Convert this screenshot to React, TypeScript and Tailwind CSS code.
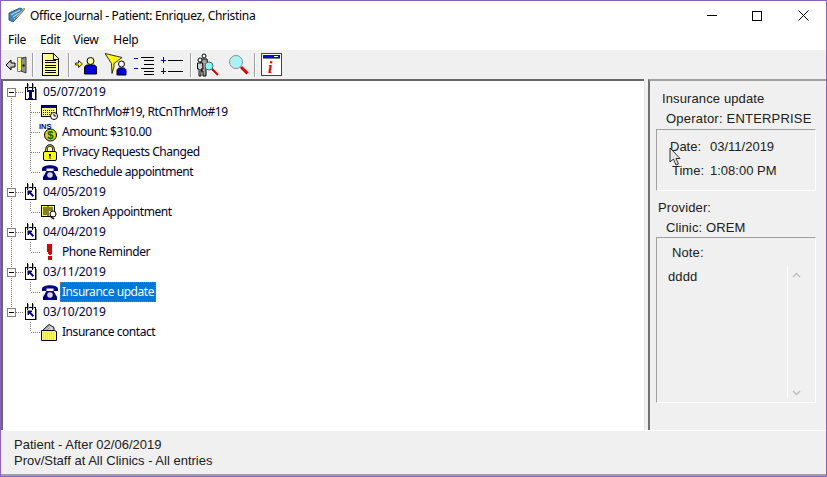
import type { ReactNode } from 'react'

const UI_FONT = "font-['Noto_Sans',sans-serif] tracking-[-0.3px]"
const PANEL_FONT = "font-['Liberation_Sans',Arial,sans-serif] tracking-[0.12px]"

// ── small bitmap-style icons ──────────────────────────────────────────────

function CalendarIcon({ kind }: { kind: 'T' | 'arrow' }) {
  return (
    <svg width="14" height="18" viewBox="0 0 14 18" className="shrink-0" shapeRendering="crispEdges">
      <rect x="1.500" y="4.500" width="10" height="12" fill="#fff" stroke="#000" />
      <rect x="12" y="6" width="1" height="11" fill="#808080" />
      <rect x="3" y="0" width="1" height="7" fill="#000" />
      <rect x="4" y="1" width="1" height="5" fill="#a0a0a0" />
      <rect x="8" y="0" width="1" height="7" fill="#000" />
      <rect x="9" y="1" width="1" height="5" fill="#a0a0a0" />
      {kind === 'T' ? (
        <path d="M3 7h7v2H8v6h1v1H4v-1h1V9H3z" fill="#000080" />
      ) : (
        <path d="M3.500 7.500h4.500V9H6.800L10 12.500 8.700 14 5 10.200V12H3.500z" fill="#000080" shapeRendering="auto" />
      )}
    </svg>
  )
}

function CardIcon() {
  return (
    <svg width="17" height="16" viewBox="0 0 17 16">
      <rect x="0.500" y="1.500" width="15" height="11" fill="#ffff80" stroke="#000" />
      <rect x="1" y="2" width="14" height="2" fill="#000080" />
      <path d="M2 6.500h12M2 8.500h9M2 10.500h8" stroke="#000" strokeDasharray="1 1" />
      <circle cx="13" cy="12" r="3.500" fill="#fff" stroke="#000" />
      <path d="M13 10v2h2" stroke="#000" fill="none" />
    </svg>
  )
}

function InsCoinIcon() {
  return (
    <svg width="19" height="19" viewBox="0 0 19 19" className="-ml-0.5 tracking-normal">
      <circle cx="11.500" cy="12" r="6" fill="#d8d800" stroke="#000" />
      <text x="8.200" y="16" fontSize="11" fontWeight="700" fontFamily="Liberation Sans, sans-serif" fill="#006000">
        $
      </text>
      <text x="0" y="6" fontSize="7.500" fontWeight="700" fontFamily="Liberation Sans, sans-serif" fill="#000080">
        INS
      </text>
    </svg>
  )
}

function LockIcon() {
  return (
    <svg width="16" height="17" viewBox="0 0 16 17">
      <path d="M4.500 8V5a3.500 3.500 0 0 1 7 0v3" fill="none" stroke="#000" strokeWidth="2.500" />
      <path d="M4.500 8V5a3.500 3.500 0 0 1 7 0v3" fill="none" stroke="#ffff00" strokeWidth="0.800" />
      <rect x="1.500" y="7.500" width="13" height="9" rx="1.500" fill="#ffff00" stroke="#000" />
      <path d="M7 10h2v2h-.5v3h-1v-3H7z" fill="#000" />
    </svg>
  )
}

function PhoneIcon() {
  return (
    <svg width="16" height="16" viewBox="0 0 16 16">
      <path d="M0 5c0-5 16-5 16 0v2h-4.500V4.500h-7V7H0z" fill="#000080" />
      <path d="M4.500 7h7L15 13v3H1v-3z" fill="#000080" />
      <circle cx="8" cy="11" r="2.800" fill="#d8d8d8" />
    </svg>
  )
}

function BrokenIcon() {
  return (
    <svg width="17" height="16" viewBox="0 0 17 16">
      <rect x="0.500" y="1.500" width="13" height="11" fill="#ffff60" stroke="#000" />
      <path d="M2 4h4M2 6h4M2 8h4M2 10h4M8 4h4M8 6h4" stroke="#000" />
      <path d="M7 1v12" stroke="#000" />
      <circle cx="12" cy="10" r="3" fill="#fff" stroke="#000" />
      <path d="M10 13l3 2" stroke="#000" strokeWidth="1.500" />
    </svg>
  )
}

function AlertIcon() {
  return (
    <svg width="16" height="16" viewBox="0 0 16 16" shapeRendering="crispEdges">
      <path d="M5 0h5v10H9v1H7v-1H6V8H5z" fill="#e00000" />
      <rect x="6" y="12" width="4" height="4" fill="#e00000" />
    </svg>
  )
}

function FolderIcon() {
  return (
    <svg width="17" height="17" viewBox="0 0 17 17">
      <path d="M1.500 6.500 8 .5l5 3v4h-11.500z" fill="#d8d8d8" stroke="#000" />
      <path d="M4 5l4-3M5 6.500l4-3" stroke="#808080" />
      <path d="M.5 6.500h13l2 1v9H.5z" fill="#ffff60" stroke="#000" />
      <path d="M2 9h12M2 11h12M2 13h12M2 15h12" stroke="#c8c840" strokeDasharray="1 1" />
    </svg>
  )
}

// ── toolbar icons ─────────────────────────────────────────────────────────

function ExitDoorIcon() {
  return (
    <svg width="22" height="18" viewBox="0 0 22 18">
      <path d="M1 9l5-5v3h4v4H6v3z" fill="#c8c8c8" stroke="#000" />
      <path d="M12.500 1.500h8v14h-8z" fill="#fff" stroke="#808080" />
      <path d="M16 3l5-2v16l-5-2z" fill="#909090" stroke="#404040" />
      <path d="M13 3h3v11h-3z" fill="#ffff60" />
      <rect x="17.500" y="8.500" width="2" height="2" fill="#000" />
    </svg>
  )
}

function PageIcon() {
  return (
    <svg width="18" height="23" viewBox="0 0 18 23" shapeRendering="crispEdges">
      <path d="M.5.5h11l5 5v17H.5z" fill="#ffff80" stroke="#000" />
      <path d="M11 1v5h5" fill="#fff" stroke="#000" />
      <path d="M3 7h11M3 9.500h11M3 12h11M3 14.500h11M3 17h11M3 19.500h11" stroke="#000" />
    </svg>
  )
}

function PersonArrowIcon() {
  return (
    <svg width="22" height="20" viewBox="0 0 22 20">
      <path d="M0.500 8h3V5.500l4 3.500-4 3.500V10h-3z" fill="#ffff00" stroke="#000" strokeWidth="0.800" />
      <circle cx="15.500" cy="6" r="3.500" fill="#ffffa0" stroke="#000" />
      <path d="M9.500 19v-6c0-2.500 2-3 3-3h6c1 0 3 .5 3 3v6z" fill="#0000e0" stroke="#000" />
    </svg>
  )
}

function FilterPersonIcon() {
  return (
    <svg width="23" height="23" viewBox="0 0 23 23">
      <path d="M0 .5l17 4-8 6 0 3-2 7-.5-10z" fill="#ffff00" stroke="#000" strokeWidth="0.800" />
      <circle cx="16.500" cy="11" r="3" fill="#fff" stroke="#000" />
      <path d="M12 22v-4c0-2 1.500-3 2.500-3h4c1 0 2.500 1 2.500 3v4z" fill="#0000e0" stroke="#000" />
    </svg>
  )
}

function IndentIcon() {
  return (
    <svg width="22" height="20" viewBox="0 0 22 20" shapeRendering="crispEdges">
      <path d="M1 3h4M1 13h4" stroke="#000080" strokeWidth="1" />
      <path d="M8 2h13M11 5h10M11 9h10M8 13h13M11 16h10M11 19h10" stroke="#000" strokeWidth="1" />
    </svg>
  )
}

function PlusListIcon() {
  return (
    <svg width="22" height="18" viewBox="0 0 22 18" shapeRendering="crispEdges">
      <path d="M0 4h5M2.500 1v6M0 15h5M2.500 12v6" stroke="#000080" strokeWidth="1" />
      <path d="M7 4h15M7 15h15" stroke="#000" strokeWidth="1" />
    </svg>
  )
}

function PeopleMagnifyIcon() {
  return (
    <svg width="22" height="24" viewBox="0 0 22 24">
      <circle cx="7" cy="3" r="2" fill="#fff" stroke="#000" />
      <path d="M4 6h6l1 8H9v9H6v-5H4z" fill="#a0a0a0" stroke="#000" />
      <circle cx="3" cy="7" r="2" fill="#fff" stroke="#000" />
      <path d="M0.500 10h5l.5 6H4v7H2v-7H.5z" fill="#d0d0d0" stroke="#000" />
      <circle cx="12" cy="13" r="4" fill="#80ffff" stroke="#606060" />
      <path d="M15 16l6 6" stroke="#d00000" strokeWidth="2" />
    </svg>
  )
}

function MagnifierIcon() {
  return (
    <svg width="21" height="21" viewBox="0 0 21 21">
      <circle cx="8" cy="8" r="6.500" fill="#a8f4f4" stroke="#909090" />
      <path d="M13 13l6.500 6.500" stroke="#e00000" strokeWidth="3" />
    </svg>
  )
}

function InfoWindowIcon() {
  return (
    <svg width="21" height="23" viewBox="0 0 21 23" className="tracking-normal">
      <rect x="0.500" y="0.500" width="20" height="22" fill="#fff" stroke="#404040" />
      <rect x="2" y="2" width="17" height="3" fill="#0000e0" />
      <rect x="13" y="3" width="4" height="1" fill="#fff" />
      <rect x="2" y="5" width="17" height="1" fill="#808080" />
      <text x="7" y="20" fontSize="16" fontWeight="700" fontStyle="italic" fontFamily="Liberation Serif, serif" fill="#e00000">
        i
      </text>
    </svg>
  )
}

function ToolSep({ className }: { className: string }) {
  return <span className={`h-[24px] w-[2px] shrink-0 border-l border-[#a0a0a0] bg-white ${className}`} />
}

// ── tree ──────────────────────────────────────────────────────────────────

/* connector lines for one 20px row; drawn relative to the row's left edge */
function RootGutter({ first, last }: { first?: boolean; last?: boolean }) {
  return (
    <svg width="20" height="20" viewBox="0 0 20 20" className="shrink-0" shapeRendering="crispEdges">
      {!first && <path d="M7.500 0v6" stroke="#808080" strokeDasharray="1 1" />}
      {!last && <path d="M7.500 14v6" stroke="#808080" strokeDasharray="1 1" />}
      <path d="M12 10h8" stroke="#808080" strokeDasharray="1 1" />
      <rect x="3.500" y="6.500" width="8" height="8" fill="#fff" stroke="#808080" />
      <path d="M5 10.500h5" stroke="#000" />
    </svg>
  )
}

function ChildGutter({ more, rootMore }: { more: boolean; rootMore: boolean }) {
  return (
    <svg width="37" height="20" viewBox="0 0 37 20" className="shrink-0" shapeRendering="crispEdges">
      {rootMore && <path d="M7.500 0v20" stroke="#808080" strokeDasharray="1 1" />}
      <path d={more ? 'M26.500 0v20' : 'M26.500 0v10'} stroke="#808080" strokeDasharray="1 1" />
      <path d="M27 10.500h10" stroke="#808080" strokeDasharray="1 1" />
    </svg>
  )
}

type Entry = { icon: ReactNode; label: string; selected?: boolean }
type Day = { date: string; kind: 'T' | 'arrow'; entries: Entry[] }

const DAYS: Day[] = [
  {
    date: '05/07/2019',
    kind: 'T',
    entries: [
      { icon: <CardIcon />, label: 'RtCnThrMo#19, RtCnThrMo#19' },
      { icon: <InsCoinIcon />, label: 'Amount: $310.00' },
      { icon: <LockIcon />, label: 'Privacy Requests Changed' },
      { icon: <PhoneIcon />, label: 'Reschedule appointment' },
    ],
  },
  { date: '04/05/2019', kind: 'arrow', entries: [{ icon: <BrokenIcon />, label: 'Broken Appointment' }] },
  { date: '04/04/2019', kind: 'arrow', entries: [{ icon: <AlertIcon />, label: 'Phone Reminder' }] },
  { date: '03/11/2019', kind: 'arrow', entries: [{ icon: <PhoneIcon />, label: 'Insurance update', selected: true }] },
  { date: '03/10/2019', kind: 'arrow', entries: [{ icon: <FolderIcon />, label: 'Insurance contact' }] },
]

function TreeRows() {
  return (
    <div className="pt-[1px] text-[12px] leading-[20px] tracking-[-0.45px] text-black">
      {DAYS.map((day, d) => (
        <div key={day.date}>
          <div className="flex h-[20px] items-center">
            <RootGutter first={d === 0} last={d === DAYS.length - 1} />
            <CalendarIcon kind={day.kind} />
            <span className="ml-[5px] tracking-[-0.1px] text-[#000040]">{day.date}</span>
          </div>
          {day.entries.map((entry, i) => (
            <div key={entry.label} className="flex h-[20px] items-center">
              <ChildGutter more={i < day.entries.length - 1} rootMore={d < DAYS.length - 1} />
              <span className="flex w-[17px] shrink-0 justify-center">{entry.icon}</span>
              {entry.selected ? (
                <span className="ml-[2px] border border-dotted border-[#d06000] bg-[#0078d7] pl-[1px] pr-[1px] leading-[18px] text-white">
                  {entry.label}
                </span>
              ) : (
                <span className="ml-[4px] text-[#000030]">{entry.label}</span>
              )}
            </div>
          ))}
        </div>
      ))}
    </div>
  )
}

// ── right-hand detail panel ───────────────────────────────────────────────

function InsetBox({ className, children }: { className: string; children: ReactNode }) {
  return (
    <div className={`border border-t-[#a0a0a0] border-l-[#a0a0a0] border-r-white border-b-white ${className}`}>
      {children}
    </div>
  )
}

function DetailPanel() {
  return (
    <div className={`relative flex min-w-0 flex-1 flex-col border-t-2 border-l-2 border-t-[#a0a0a0] border-l-[#707070] pt-[8px] ${PANEL_FONT} text-[13px] leading-[20px] text-[#202020]`}>
      <div className="pl-[12px]">Insurance update</div>
      <div className="pl-[16px] tracking-[0.2px]">Operator: ENTERPRISE</div>
      <InsetBox className="ml-[6px] h-[62px] w-[160px] pt-[7px]">
        <div className="flex pl-[13px] tracking-normal">
          <span className="w-[40px]">Date:</span>
          <span>03/11/2019</span>
        </div>
        <div className="mt-[4px] flex pl-[15px] tracking-normal">
          <span className="w-[38px]">Time:</span>
          <span>1:08:00 PM</span>
        </div>
      </InsetBox>
      <div className="mt-[7px] pl-[8px]">Provider:</div>
      <div className="pl-[16px]">Clinic: OREM</div>
      <InsetBox className="mt-[-1px] ml-[6px] flex h-[166px] w-[160px] flex-col pt-[5px]">
        <div className="pl-[15px]">Note:</div>
        <div className="mt-[3px] flex flex-1">
          <div className="flex-1 pt-[1px] pl-[11px]">dddd</div>
          <div className="mb-[4px] flex w-[28px] flex-col items-center justify-between border-l border-white pt-[6px] pb-[2px] pr-[11px] pl-[1px]">
            <svg width="9" height="6" viewBox="0 0 9 6">
              <path d="M1 5l3.500-3.500L8 5" fill="none" stroke="#c0c0c0" strokeWidth="1.500" />
            </svg>
            <svg width="9" height="6" viewBox="0 0 9 6">
              <path d="M1 1l3.500 3.500L8 1" fill="none" stroke="#c0c0c0" strokeWidth="1.500" />
            </svg>
          </div>
        </div>
      </InsetBox>
      {/* mouse pointer caught in the screenshot */}
      <svg width="13" height="19" viewBox="0 0 13 19" className="absolute top-[66px] left-[19px]">
        <path d="M1 1v14l3.500-3 2.500 6 2.500-1-2.500-5.500H11z" fill="#e8e8e8" stroke="#303030" />
      </svg>
    </div>
  )
}

export default function App() {
  return (
    <div className={`flex h-[477px] w-[827px] flex-col overflow-hidden border border-[#8764b8] bg-white ${UI_FONT}`}>
      {/* title bar */}
      <div className="flex h-[29px] shrink-0 items-center bg-white pl-[7px] text-black">
        <svg width="18" height="17" viewBox="0 0 18 17" className="shrink-0">
          <path d="M1 6l11-5 4 2-11 12-4-2z" fill="#3f88b8" stroke="#2a5d85" />
          <path d="M3 8l9-5M5 10l8-5M6 12l6-4" stroke="#cfe6f4" />
          <path d="M16 1l1 1-8 9-2 1 1-2z" fill="#e8c878" stroke="#555" strokeWidth="0.500" />
        </svg>
        <span className="ml-[4px] text-[12px]">Office Journal - Patient: Enriquez, Christina</span>
        <svg width="10" height="1" viewBox="0 0 10 1" className="ml-auto mr-[35px]">
          <rect width="10" height="1" fill="#000" />
        </svg>
        <svg width="10" height="10" viewBox="0 0 10 10" className="mr-[36px]">
          <rect x="0.500" y="0.500" width="9" height="9" fill="none" stroke="#000" />
        </svg>
        <svg width="11" height="11" viewBox="0 0 11 11" className="mr-[17px]">
          <path d="M.5.5l10 10M10.500.5l-10 10" stroke="#000" />
        </svg>
      </div>

      {/* menu */}
      <div className="flex h-[20px] shrink-0 items-center gap-[13px] bg-white pl-[7px] text-[12px] text-black">
        <span>File</span>
        <span className="ml-[1px]">Edit</span>
        <span>View</span>
        <span className="ml-[2px]">Help</span>
      </div>

      {/* toolbar */}
      <div className="flex h-[29px] shrink-0 items-center bg-[#f0f0f0] pl-[4px]">
        <ExitDoorIcon />
        <ToolSep className="ml-[5px]" />
        <span className="ml-[8px] flex"><PageIcon /></span>
        <ToolSep className="ml-[8px]" />
        <span className="ml-[5px] flex"><PersonArrowIcon /></span>
        <span className="ml-[8px] flex"><FilterPersonIcon /></span>
        <span className="ml-[5px] flex"><IndentIcon /></span>
        <span className="ml-[6px] flex"><PlusListIcon /></span>
        <ToolSep className="ml-[7px]" />
        <span className="ml-[5px] flex"><PeopleMagnifyIcon /></span>
        <span className="ml-[9px] flex"><MagnifierIcon /></span>
        <ToolSep className="ml-[5px]" />
        <span className="ml-[5px] flex"><InfoWindowIcon /></span>
      </div>

      {/* body */}
      <div className="flex min-h-0 flex-1 bg-[#f0f0f0]">
        <div className="w-[643px] shrink-0 overflow-hidden border-t-2 border-l-2 border-t-[#696969] border-l-[#696969] bg-white pl-[1px]">
          <TreeRows />
        </div>
        <div className="w-[4px] shrink-0 border-l border-[#e8e8e8]" />
        <DetailPanel />
      </div>

      {/* status */}
      <div className={`flex h-[46px] shrink-0 flex-col border-t border-b-2 border-t-white border-b-[#a0a0a0] bg-[#f0f0f0] pt-[6px] pl-[13px] ${PANEL_FONT} text-[13px] leading-[16px] tracking-normal text-[#202020]`}>
        <div>Patient - After 02/06/2019</div>
        <div>Prov/Staff at All Clinics - All entries</div>
      </div>
    </div>
  )
}
